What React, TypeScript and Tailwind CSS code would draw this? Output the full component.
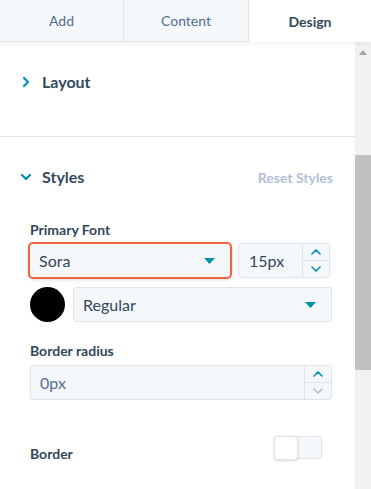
const teal = "#0091ae";

function Chevron({ open }: { open?: boolean }) {
  return (
    <svg width="12" height="12" viewBox="0 0 12 12" className={open ? "rotate-90" : ""}>
      <path d="M4 2 L8 6 L4 10" fill="none" stroke={teal} strokeWidth="2.2" strokeLinecap="round" strokeLinejoin="round" />
    </svg>
  );
}

function Caret() {
  return (
    <svg width="11" height="6" viewBox="0 0 11 6">
      <path d="M0 0 H11 L5.5 6 Z" fill={teal} />
    </svg>
  );
}

function Stepper({ downDisabled }: { downDisabled?: boolean }) {
  return (
    <div className="flex h-full w-[27px] flex-col border-l border-[#dfe3eb]">
      <div className="flex flex-1 items-center justify-center border-b border-[#dfe3eb]">
        <svg width="10" height="6" viewBox="0 0 10 6">
          <path d="M1 5 L5 1 L9 5" fill="none" stroke={teal} strokeWidth="1.6" strokeLinecap="round" />
        </svg>
      </div>
      <div className="flex flex-1 items-center justify-center">
        <svg width="10" height="6" viewBox="0 0 10 6">
          <path d="M1 1 L5 5 L9 1" fill="none" stroke={downDisabled ? "#b0c1d4" : teal} strokeWidth="1.6" strokeLinecap="round" />
        </svg>
      </div>
    </div>
  );
}

export default function App() {
  return (
    <div className="flex h-[489px] w-[371px] flex-col overflow-hidden bg-white font-['Lato','Open_Sans',sans-serif] text-[#33475b]">
      <div className="relative z-10 flex h-[42px] shadow-[0_2px_6px_rgba(0,0,0,0.06)]">
        <div className="flex w-[124px] items-center justify-center border-r border-b border-[#dfe3eb] bg-[#f5f8fa] text-[14px] text-[#516f90]">Add</div>
        <div className="flex w-[125px] items-center justify-center border-r border-b border-[#dfe3eb] bg-[#f5f8fa] text-[14px] text-[#516f90]">Content</div>
        <div className="flex flex-1 items-center justify-center bg-white text-[14px] font-bold text-[#33475b]">Design</div>
      </div>
      <div className="flex flex-1">
        <div className="flex-1">
          <div className="h-[95px] border-b border-[#dfe3eb] pt-[27px]">
            <div className="flex h-[26px] items-center pl-[20px]">
              <Chevron />
              <span className="ml-[10px] text-[16px] font-bold">Layout</span>
            </div>
          </div>
          <div className="pt-[27px]">
            <div className="flex h-[26px] items-center pl-[20px] pr-[22px]">
              <Chevron open />
              <span className="ml-[10px] text-[16px] font-bold">Styles</span>
              <span className="ml-auto text-[14px] font-bold text-[#b0c1d4]">Reset Styles</span>
            </div>
            <div className="pl-[30px]">
              <div className="mt-[30px] flex h-[18px] items-center text-[14px] font-bold">Primary Font</div>
              <div className="mt-[4px] flex items-center gap-[6px]">
                <div className="flex h-[37px] w-[204px] -ml-[2px] items-center justify-between rounded-[5px] border-2 border-[#f5623f] bg-[#f5f8fa] pl-[9px] pr-[15px] shadow-[0_1px_3px_rgba(0,0,0,0.15)]">
                  <span className="text-[16px]">Sora</span>
                  <Caret />
                </div>
                <div className="flex h-[35px] w-[92px] items-center rounded-[3px] border border-[#dfe3eb] bg-[#f5f8fa]">
                  <span className="flex-1 pl-[10px] text-[16px]">15px</span>
                  <Stepper />
                </div>
              </div>
              <div className="mt-[8px] flex items-center gap-[8px]">
                <div className="h-[35px] w-[35px] rounded-full bg-black" />
                <div className="flex h-[35px] w-[259px] items-center justify-between rounded-[3px] border border-[#dfe3eb] bg-[#f5f8fa] pl-[9px] pr-[15px]">
                  <span className="text-[16px]">Regular</span>
                  <Caret />
                </div>
              </div>
              <div className="mt-[19px] flex h-[18px] items-center text-[14px] font-bold">Border radius</div>
              <div className="mt-[6px] flex h-[35px] w-[302px] items-center rounded-[3px] border border-[#dfe3eb] bg-[#f5f8fa]">
                <span className="flex-1 pl-[9px] text-[16px] text-[#516f90]">0px</span>
                <Stepper downDisabled />
              </div>
              <div className="mt-[35px] flex h-[24px] w-[292px] items-center justify-between">
                <span className="mt-[12px] text-[14px] font-bold">Border</span>
                <div className="relative h-[23px] w-[48px] rounded-[3px] border border-[#dfe3eb] bg-[#f5f8fa]">
                  <div className="absolute -left-px -top-px h-[24px] w-[24px] rounded-[3px] border border-[#dfe3eb] bg-white shadow-[0_1px_3px_rgba(0,0,0,0.15)]" />
                </div>
              </div>
            </div>
          </div>
        </div>
        <div className="flex w-[16px] flex-col bg-[#f1f1f1]">
          <div className="flex h-[20px] items-center justify-center">
            <svg width="8" height="5" viewBox="0 0 8 5"><path d="M0 5 L4 0 L8 5 Z" fill="#a3a3a3" /></svg>
          </div>
          <div className="mt-[93px] h-[215px] bg-[#c1c1c1]" />
        </div>
      </div>
    </div>
  );
}
